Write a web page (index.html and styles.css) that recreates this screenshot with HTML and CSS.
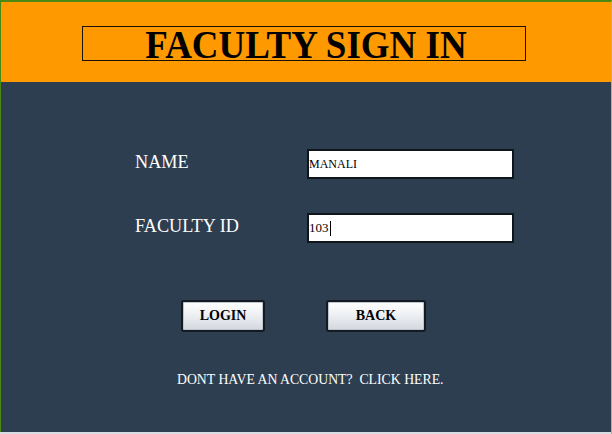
FILE: index.html
```html
<!DOCTYPE html>
<html>
<head>
<meta charset="utf-8">
<link rel="stylesheet" href="styles.css">
</head>
<body>
<div class="frame">
  <header class="header">
    <div class="title-box"><h1 class="title">FACULTY SIGN IN</h1></div>
  </header>
  <main class="main">
    <div class="form">
      <label class="label">NAME</label>
      <div class="input"><span class="small">MANALI</span></div>
      <label class="label">FACULTY ID</label>
      <div class="input"><span>103</span><span class="caret"></span></div>
    </div>
    <div class="buttons">
      <button class="btn btn-login">LOGIN</button>
      <button class="btn btn-back">BACK</button>
    </div>
    <p class="footer">DONT HAVE AN ACCOUNT?&nbsp; CLICK HERE.</p>
  </main>
  <div class="bottom"></div>
</div>
</body>
</html>
```
FILE: styles.css
```css
html, body { margin: 0; padding: 0; }
body { width: 612px; height: 434px; overflow: hidden; font-family: "Liberation Serif", "Times New Roman", serif; }
.frame {
  width: 612px; height: 434px; box-sizing: border-box;
  border-top: 2px solid #4b8a12; border-left: 1px solid #4b8a12; border-right: 1px solid #c9a77a;
  display: flex; flex-direction: column; background: #2d3e50;
}
.header {
  height: 80px; background: #ff9900; box-sizing: border-box;
  padding: 24px 0 0 81px;
}
.title-box {
  width: 444px; height: 35px; box-sizing: border-box; border: 1px solid #1a1200;
  display: flex; align-items: center; justify-content: center; padding-left: 4px;
}
.title { margin: 0; font-size: 37px; font-weight: bold; color: #000; line-height: 1; padding-top: 1px; transform: scaleY(1.08); }
.main { flex: 1; padding-top: 67px; color: #fff; }
.form {
  display: grid; grid-template-columns: 172px 207px; row-gap: 34px; margin-left: 134px;
}
.label { font-size: 18.2px; display: flex; align-items: center; padding-bottom: 4px; }
.input {
  height: 30px; box-sizing: border-box; background: #fff; border: 2px solid #10151c;
  color: #000; font-size: 13px; display: flex; align-items: center; padding-left: 0;
}
.small { font-size: 12px; }
.caret { display: inline-block; width: 1px; height: 15px; background: #000; margin-left: 1px; }
.buttons { display: flex; margin: 57px 0 0 180px; gap: 61px; }
.btn {
  height: 32px; box-sizing: border-box; border: 2px solid #141a22; border-radius: 3px;
  background: linear-gradient(#ffffff 0%, #eef0f3 45%, #d3d8df 100%);
  box-shadow: inset 0 0 0 1px #bfc6cf;
  font-family: "Liberation Serif", "Times New Roman", serif; font-weight: bold; font-size: 14px; color: #000;
  padding: 0;
}
.btn-login { width: 84px; }
.btn-back { width: 100px; }
.footer { margin: 40px 0 0 176px; font-size: 13.75px; color: #fff; }
.bottom { height: 2px; background: #d8dde3; margin-left: -1px; }
```
